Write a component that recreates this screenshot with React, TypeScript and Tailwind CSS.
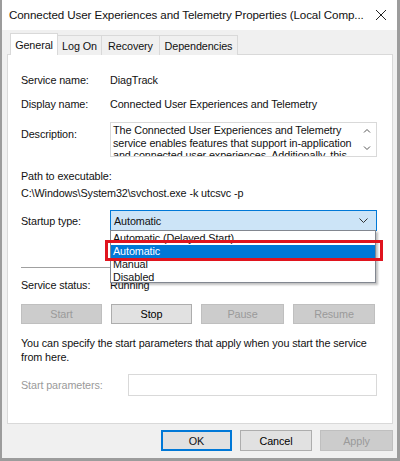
import React from "react";

const font = { fontFamily: '"Liberation Sans", Arial, sans-serif' };

function Row({ label, children, className = "", labelClass = "" }: { label: string; children: React.ReactNode; className?: string; labelClass?: string }) {
  return (
    <div className={"flex " + className}>
      <div className={"w-[89px] shrink-0 " + labelClass}>{label}</div>
      <div className="flex-1">{children}</div>
    </div>
  );
}

function Btn({ label, disabled, className = "" }: { label: string; disabled?: boolean; className?: string }) {
  return (
    <div
      className={
        "h-[20px] flex items-center justify-center border " +
        (disabled ? "bg-[#cccccc] border-[#bfbfbf] text-[#9a9a9a] " : "bg-[#e1e1e1] border-[#adadad] text-black ") +
        className
      }
    >
      {label}
    </div>
  );
}

export default function App() {
  return (
    <div
      className="w-[400px] h-[461px] bg-[#f0f0f0] border-l-2 border-r-[3px] border-b-[3px] border-[#9c9c9c] text-[10.8px] tracking-[-0.1px] leading-[16px] text-[#111] overflow-hidden"
      style={font}
    >
      {/* title bar */}
      <div className="h-[30px] bg-white flex items-center justify-between pl-[7px] pr-[8px]">
        <span className="text-[11.6px] tracking-[-0.1px] text-[#111] whitespace-nowrap">Connected User Experiences and Telemetry Properties (Local Comp...</span>
        <svg width="12" height="12" viewBox="0 0 12 12" className="mr-[2px] shrink-0">
          <path d="M1 1 L11 11 M11 1 L1 11" stroke="#222" strokeWidth="1" />
        </svg>
      </div>

      {/* tabs */}
      <div className="flex items-end pl-[8px] pt-[3px] h-[25px] relative z-10">
        <div className="w-[48px] h-[22px] bg-white border border-b-0 border-[#d9d9d9] flex items-center justify-center">General</div>
        <div className="w-[44px] h-[20px] bg-[#f0f0f0] border border-l-0 border-b-0 border-[#d9d9d9] flex items-center justify-center">Log On</div>
        <div className="w-[58px] h-[20px] bg-[#f0f0f0] border border-l-0 border-b-0 border-[#d9d9d9] flex items-center justify-center">Recovery</div>
        <div className="w-[78px] h-[20px] bg-[#f0f0f0] border border-l-0 border-b-0 border-[#d9d9d9] flex items-center justify-center">Dependencies</div>
      </div>

      {/* panel */}
      <div className="relative -mt-px ml-[5px] mr-[4px] h-[370px] bg-white border border-[#d9d9d9] pl-[13px] pr-[15px] pt-[17px]">
        <Row label="Service name:">DiagTrack</Row>
        <Row label="Display name:" className="mt-[8px]">Connected User Experiences and Telemetry</Row>
        <Row label="Description:" className="mt-[10px]" labelClass="pt-[4px]">
          <div className="h-[35px] border border-[#d9d9d9] flex overflow-hidden">
            <div className="flex-1 pl-[2px] pt-px leading-[12.5px] overflow-hidden">
              The Connected User Experiences and Telemetry service enables features that support in-application and connected user experiences. Additionally, this
            </div>
            <div className="w-[18px] flex flex-col items-center justify-between py-[5px] text-[#555]">
              <svg width="8" height="5" viewBox="0 0 8 5"><path d="M1 4.5 L4 1.5 L7 4.5" fill="none" stroke="#555" /></svg>
              <svg width="8" height="5" viewBox="0 0 8 5"><path d="M1 0.5 L4 3.5 L7 0.5" fill="none" stroke="#555" /></svg>
            </div>
          </div>
        </Row>
        <div className="mt-[11px]">Path to executable:</div>
        <div className="mt-px">C:\Windows\System32\svchost.exe -k utcsvc -p</div>
        <Row label="Startup type:" className="mt-[9px] items-center">
          <div className="h-[21px] border border-[#0078d7] bg-[#cce4f7] flex items-center justify-between pl-[3px] pr-[8px]">
            <span>Automatic</span>
            <svg width="9" height="5" viewBox="0 0 9 5"><path d="M0.5 0.5 L4.5 4.5 L8.5 0.5" fill="none" stroke="#333" /></svg>
          </div>
        </Row>
        <div className="mt-[36px] h-px w-[100px] bg-[#a0a0a0]" />
        <Row label="Service status:" className="mt-[9px]">Running</Row>
        <div className="mt-[11px] flex gap-[9px]">
          <Btn label="Start" disabled className="w-[81px]" />
          <Btn label="Stop" className="w-[81px]" />
          <Btn label="Pause" disabled className="w-[83px]" />
          <Btn label="Resume" disabled className="w-[82px]" />
        </div>
        <div className="mt-[13px] leading-[13.5px]">
          You can specify the start parameters that apply when you start the service from here.
        </div>
        <div className="mt-[10px] flex items-center text-[#9a9a9a]">
          <div className="w-[107px] shrink-0">Start parameters:</div>
          <div className="flex-1 h-[22px] border border-[#d9d9d9] bg-white" />
        </div>

        {/* open dropdown list */}
        <div className="absolute left-[102px] top-[175px] w-[266px] h-[53px] bg-white border border-[#828790] shadow-[2px_2px_2px_rgba(0,0,0,0.25)] leading-[13px] pt-px">
          <div className="pl-[2px] h-[13px] overflow-hidden">Automatic (Delayed Start)</div>
          <div className="pl-[2px] h-[13px] bg-[#0078d7] text-white">Automatic</div>
          <div className="pl-[2px] h-[13px]">Manual</div>
          <div className="pl-[2px] h-[13px]">Disabled</div>
        </div>
        {/* highlight box */}
        <div className="absolute left-[97px] top-[185px] w-[278px] h-[21px] border-[3px] border-[#e0141e]" />
      </div>

      {/* bottom buttons */}
      <div className="flex justify-end gap-[8px] pr-[4px] pt-[6px]">
        <div className="w-[71px] h-[21px] flex items-center justify-center border-2 border-[#0078d7] bg-[#e1e1e1]">OK</div>
        <Btn label="Cancel" className="w-[72px] h-[21px]" />
        <Btn label="Apply" disabled className="w-[73px] h-[21px]" />
      </div>
    </div>
  );
}
